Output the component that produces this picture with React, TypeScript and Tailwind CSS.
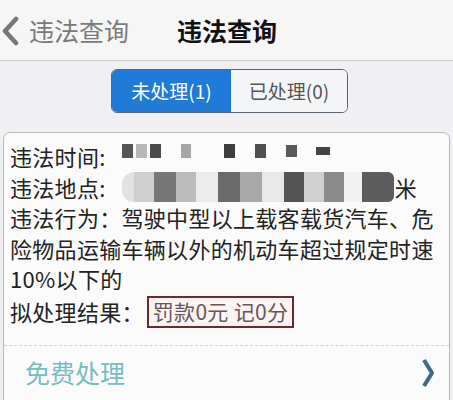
export default function App() {
  const font = { fontFamily: '"Noto Sans CJK SC", "Noto Sans", sans-serif' };

  return (
    <div className="w-[453px] h-[400px] overflow-hidden bg-[#f0f0f2] text-[#222]" style={font}>
      {/* Header */}
      <div className="h-[61px] flex items-center bg-[#f6f6f7] border-b border-[#c9c9cc]">
        <svg width="20" height="30" viewBox="0 0 20 30" className="ml-[1px] mt-[2px]">
          <path d="M15 3 L4 15 L15 27" fill="none" stroke="#777" strokeWidth="4.5" strokeLinecap="round" strokeLinejoin="round" />
        </svg>
        <span className="ml-[8px] text-[25px] text-[#7a7a7a] leading-none">违法查询</span>
        <span className="ml-[48px] text-[25px] font-bold text-[#111] leading-none">违法查询</span>
      </div>

      {/* Tabs */}
      <div className="pt-[8px] pl-[111px]">
        <div className="flex w-[237px] h-[44px] rounded-[6px] border border-[#5b6670] overflow-hidden text-[19px]">
          <div className="w-[119px] flex items-center justify-center bg-[#1f7bd6] text-white">未处理(1)</div>
          <div className="flex-1 flex items-center justify-center bg-[#f4f5f7] text-[#555]">已处理(0)</div>
        </div>
      </div>

      {/* Card */}
      <div className="mt-[19px] mx-[3px] rounded-t-[7px] border border-[#b9b9bc] bg-[#fbfbfb] h-[300px]">
        <div className="pl-[6px] pt-[8px] text-[22px] leading-[30.5px] tracking-[0.3px] text-[#222]">
          <div className="flex items-center">
            <span>违法时间:</span>
            <div className="ml-[16px] mb-[10px] flex items-center gap-[3px]">
              <span className="w-[11px] h-[14px] bg-[#555]" />
              <span className="w-[11px] h-[14px] bg-[#b8b8b8]" />
              <span className="w-[11px] h-[14px] bg-[#4a4a4a]" />
              <span className="ml-[17px] w-[10px] h-[14px] bg-[#a6a6a6]" />
              <span className="ml-[30px] w-[11px] h-[14px] bg-[#3e3e3e]" />
              <span className="ml-[17px] w-[11px] h-[14px] bg-[#4f4f4f]" />
              <span className="ml-[17px] w-[11px] h-[12px] bg-[#5a5a5a]" />
              <span className="ml-[16px] w-[14px] h-[8px] bg-[#444]" />
            </div>
          </div>
          <div className="flex items-center">
            <span>违法地点:</span>
            <div className="ml-[16px] flex h-[30px] w-[272px]">
              <span className="w-[12px] bg-[#e2e2e2] rounded-l-full" />
              <span className="w-[20px] bg-[#cfcfcf]" />
              <span className="w-[22px] bg-[#777]" />
              <span className="w-[20px] bg-[#bcbcbc]" />
              <span className="w-[22px] bg-[#ececec]" />
              <span className="w-[22px] bg-[#6b6b6b]" />
              <span className="w-[22px] bg-[#a8a8a8]" />
              <span className="w-[22px] bg-[#e8e8e8]" />
              <span className="w-[20px] bg-[#555]" />
              <span className="w-[20px] bg-[#d0d0d0]" />
              <span className="w-[20px] bg-[#8a8a8a]" />
              <span className="w-[18px] bg-[#f2f2f2]" />
              <span className="w-[32px] bg-[#5d5d5d] rounded-r-[6px]" />
            </div>
            <span className="ml-[1px]">米</span>
          </div>
          <div>违法行为：驾驶中型以上载客载货汽车、危</div>
          <div>险物品运输车辆以外的机动车超过规定时速</div>
          <div>10%以下的</div>
          <div className="flex items-center mt-[2px]">
            <span>拟处理结果：</span>
            <span className="ml-[3px] h-[32px] px-[4px] flex items-center border-[2px] border-[#6a2a30] bg-[#fcf4f4] text-[#6b5558] text-[21px] leading-none">
              罚款0元 记0分
            </span>
          </div>
        </div>

        <div className="mt-[17px] border-t border-dashed border-[#cfd3d6]" />

        <div className="flex items-center h-[54px] pl-[21px] pr-[14px]">
          <span className="text-[25px] text-[#78bcc2] leading-none">免费处理</span>
          <svg width="14" height="30" viewBox="0 0 14 30" className="ml-auto">
            <path d="M3 2 L11 15 L3 28" fill="none" stroke="#3e6a86" strokeWidth="4" strokeLinejoin="round" />
          </svg>
        </div>
      </div>
    </div>
  );
}
